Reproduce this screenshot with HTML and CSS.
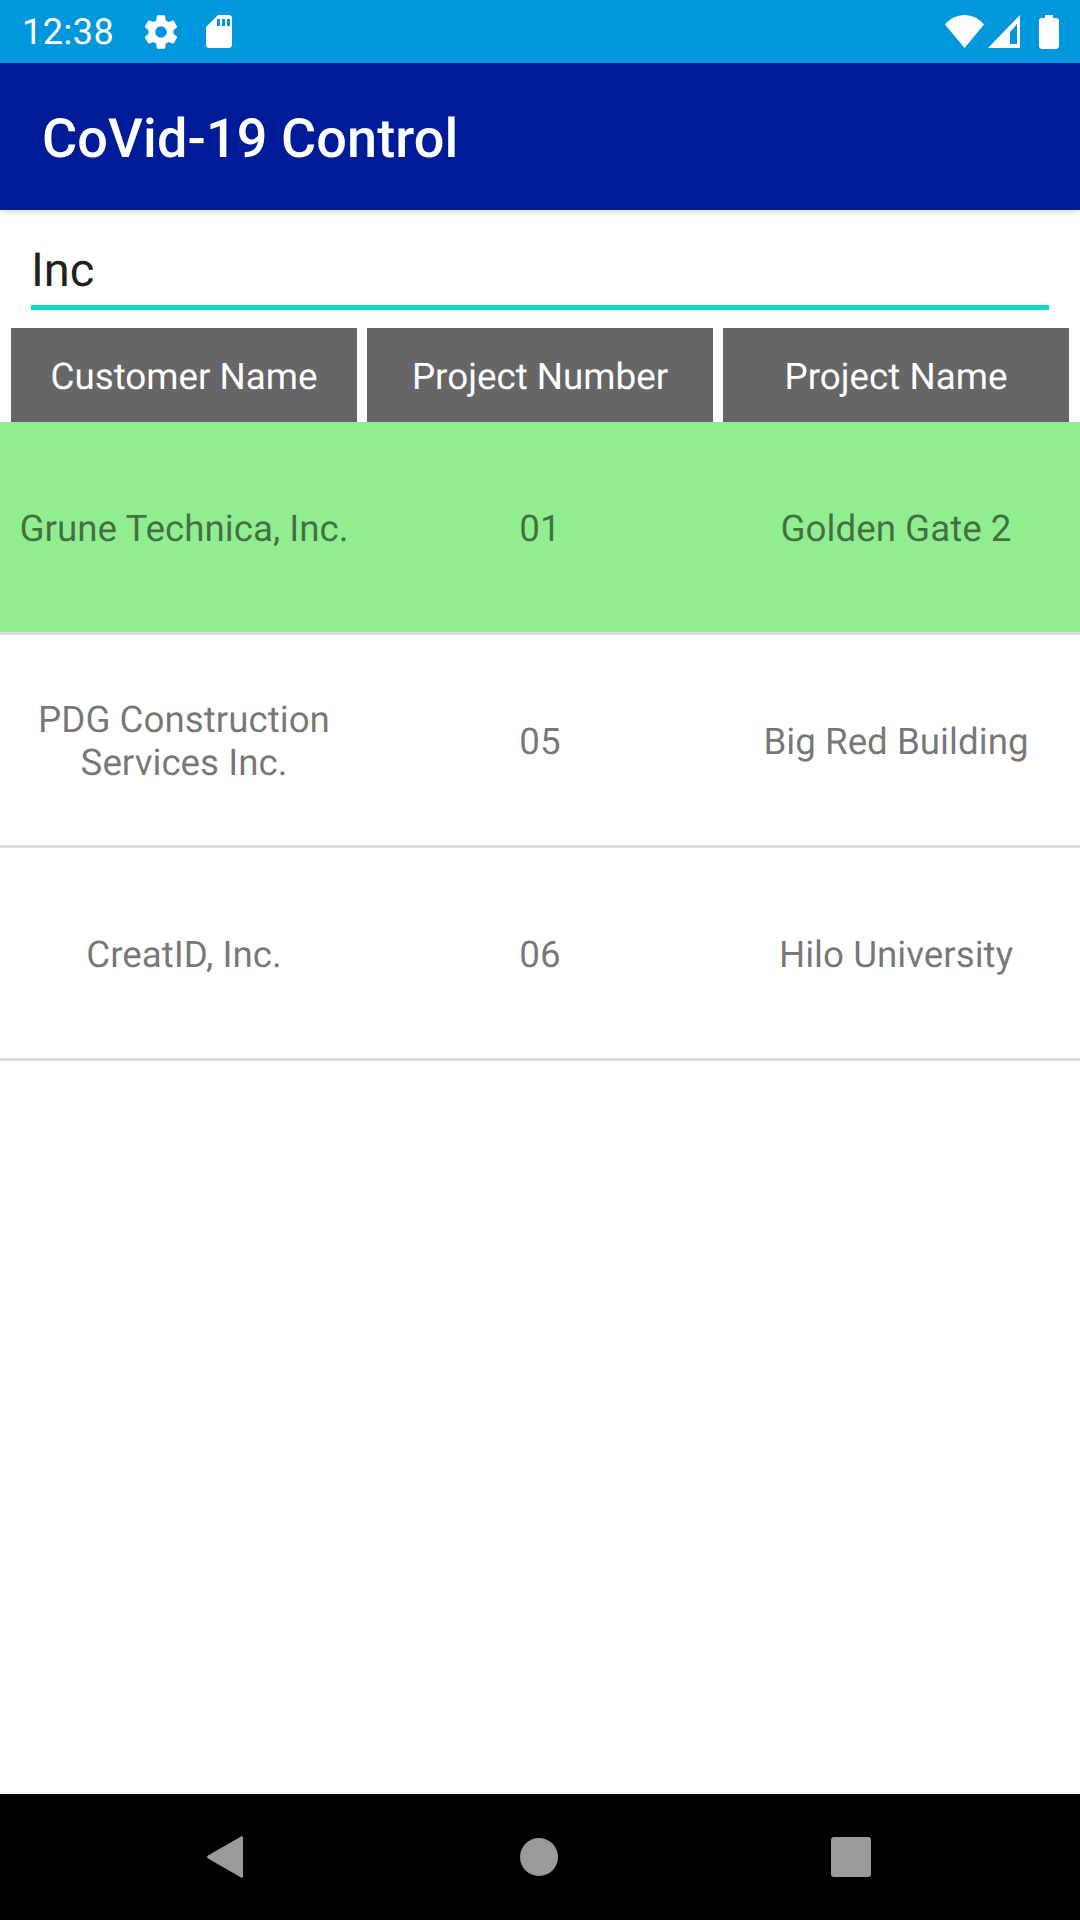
FILE: index.html
```html
<!DOCTYPE html>
<html lang="en">
<head>
    <meta charset="UTF-8">
    <meta name="viewport" content="width=device-width, initial-scale=1.0">
    <title>CoVid-19 Control</title>
    <link rel="stylesheet" href="styles.css">
</head>
<body>
    <div class="screen">
        <!-- Status bar -->
        <div class="status-bar">
            <span class="status-time">12:38</span>
            <svg class="icon-gear" viewBox="0 0 24 24"><path fill="#fff" d="M19.4 13c.04-.32.1-.66.1-1s-.06-.68-.1-1l2.1-1.65c.2-.15.25-.42.13-.64l-2-3.46c-.12-.22-.39-.3-.61-.22l-2.49 1c-.52-.4-1.08-.73-1.69-.98l-.38-2.65A.49.49 0 0 0 14 2h-4c-.25 0-.46.18-.49.42l-.38 2.65c-.61.25-1.17.59-1.69.98l-2.49-1c-.23-.09-.49 0-.61.22l-2 3.46c-.13.22-.07.49.12.64L4.57 11c-.04.32-.07.65-.07 1s.03.68.07 1l-2.11 1.65c-.19.15-.24.42-.12.64l2 3.46c.12.22.39.3.61.22l2.49-1c.52.4 1.08.73 1.69.98l.38 2.65c.03.24.24.42.49.42h4c.25 0 .46-.18.49-.42l.38-2.65c.61-.25 1.17-.59 1.69-.98l2.49 1c.23.09.49 0 .61-.22l2-3.46c.12-.22.07-.49-.12-.64L19.4 13zM12 15.500a3.500 3.500 0 1 1 0-7 3.500 3.500 0 0 1 0 7z"/></svg>
            <svg class="icon-sd" viewBox="0 0 26 33"><path fill="#fff" fill-rule="evenodd" d="M12 0h11c1.600 0 3 1.400 3 3v27c0 1.600-1.400 3-3 3H3c-1.600 0-3-1.400-3-3V12z M11 4v7h3V4z M16 4v7h3V4z M21 4v7h3V4z"/></svg>
            <span class="status-spacer"></span>
            <svg class="icon-wifi" viewBox="0 0 39 33"><path fill="#fff" d="M19.500 33 0 9.500C5 3.500 12 0 19.500 0S34 3.500 39 9.500z"/></svg>
            <svg class="icon-signal" viewBox="0 0 32 33"><path fill="#fff" fill-rule="evenodd" d="M32 0v33H0z M22 17v12h7V9z"/></svg>
            <svg class="icon-battery" viewBox="0 0 20 34"><path fill="#fff" d="M6 0h8v3h3.500c1.400 0 2.500 1.100 2.500 2.500V31c0 1.600-1.200 3-3 3H3c-1.800 0-3-1.400-3-3V5.500C0 4.100 1.100 3 2.500 3H6z"/></svg>
        </div>

        <!-- App bar -->
        <div class="app-bar">CoVid-19 Control</div>

        <!-- Search -->
        <div class="search">
            <div class="search-input">Inc</div>
        </div>

        <!-- Table header -->
        <div class="table-head">
            <div class="head-cell">Customer Name</div>
            <div class="head-cell">Project Number</div>
            <div class="head-cell">Project Name</div>
        </div>

        <!-- Rows -->
        <div class="row row-selected">
            <div class="cell">Grune Technica, Inc.</div>
            <div class="cell">01</div>
            <div class="cell">Golden Gate 2</div>
        </div>
        <div class="row">
            <div class="cell">PDG Construction Services Inc.</div>
            <div class="cell">05</div>
            <div class="cell">Big Red Building</div>
        </div>
        <div class="row">
            <div class="cell">CreatID, Inc.</div>
            <div class="cell">06</div>
            <div class="cell">Hilo University</div>
        </div>

        <div class="filler"></div>

        <!-- Navigation bar -->
        <div class="nav-bar">
            <svg class="nav-back" viewBox="0 0 36 42"><path fill="#9a9a9a" d="M34 .5c1 -.6 2 0 2 1v39c0 1-1 1.600-2 1L1 22.500c-1.300-.8-1.300-2.200 0-3z"/></svg>
            <div class="nav-home"></div>
            <div class="nav-recent"></div>
        </div>
    </div>
</body>
</html>
```

FILE: styles.css
```css
* {
    margin: 0;
    padding: 0;
    box-sizing: border-box;
}

body {
    background-color: white;
    font-family: Roboto, sans-serif;
    text-rendering: geometricPrecision;
}

.screen {
    display: flex;
    flex-direction: column;
    width: 1080px;
    height: 1920px;
    overflow: hidden;
}

.status-bar {
    display: flex;
    align-items: center;
    height: 63px;
    padding: 0 21px 0 22px;
    background-color: #0097dc;
    color: white;
}

.status-time {
    font-size: 36px;
    letter-spacing: 0.5px;
}

.status-spacer {
    flex: 1;
}

.icon-gear {
    width: 40px;
    height: 40px;
    margin-left: 27px;
}

.icon-sd {
    width: 26px;
    height: 33px;
    margin-left: 25px;
}

.icon-wifi {
    width: 39px;
    height: 33px;
}

.icon-signal {
    width: 32px;
    height: 33px;
    margin-left: 4px;
}

.icon-battery {
    width: 20px;
    height: 34px;
    margin-left: 19px;
}

.app-bar {
    display: flex;
    align-items: center;
    height: 147px;
    padding: 5px 0 0 42px;
    background-color: #001b97;
    color: white;
    font-size: 54px;
    font-weight: 500;
    letter-spacing: 0.1px;
    box-shadow: 0 3px 6px rgba(0, 0, 0, 0.12);
}

.search {
    height: 118px;
    padding: 24px 31px 0;
}

.search-input {
    height: 76px;
    border-bottom: 5px solid #00dcc8;
    color: #212121;
    font-size: 47px;
    line-height: 73px;
}

.table-head {
    display: flex;
    gap: 10px;
    height: 94px;
    padding: 0 11px;
}

.head-cell {
    display: flex;
    flex: 1;
    align-items: center;
    justify-content: center;
    padding-top: 3px;
    background-color: #666666;
    color: white;
    font-size: 36.75px;
}

.row {
    display: flex;
    gap: 10px;
    align-items: center;
    height: 213px;
    padding: 2px 11px 0;
    border-bottom: 3px solid #dedede;
    color: rgba(0, 0, 0, 0.54);
    font-size: 36.75px;
    line-height: 43px;
}

.row-selected {
    background-color: #90ee90;
}

.cell {
    flex: 1;
    padding: 0 4px;
    text-align: center;
}

.filler {
    flex: 1;
}

.nav-bar {
    position: relative;
    height: 126px;
    background-color: black;
}

.nav-back,
.nav-home,
.nav-recent {
    position: absolute;
}

.nav-back {
    left: 207px;
    top: 42px;
    width: 36px;
    height: 42px;
}

.nav-home {
    left: 520px;
    top: 44px;
    width: 38px;
    height: 38px;
    border-radius: 50%;
    background-color: #9a9a9a;
}

.nav-recent {
    left: 831px;
    top: 43px;
    width: 40px;
    height: 40px;
    border-radius: 3px;
    background-color: #9a9a9a;
}
```
